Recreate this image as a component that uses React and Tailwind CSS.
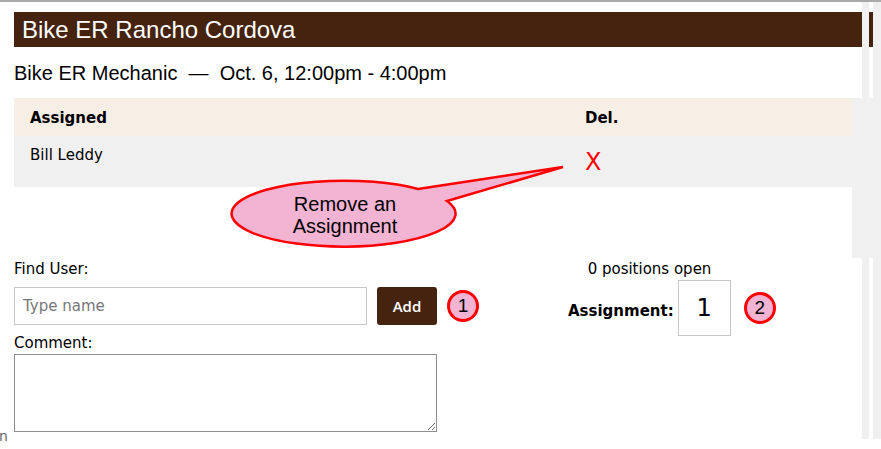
export default function App() {
  const subtitle = "Bike ER Mechanic\u00a0 \u2014\u00a0 Oct. 6, 12:00pm - 4:00pm";

  return (
    <div className="relative w-[881px] h-[449px] overflow-hidden bg-white font-['DejaVu_Sans',sans-serif] text-black">
      {/* top edge */}
      <div className="h-[2px] bg-[#a9a9a9]" />

      <div className="flex h-[437px]">
        {/* main panel */}
        <div className="w-[862px] pl-[14px] pt-[10px]">
          <div className="h-[35px] bg-[#45230f] pl-[8px] font-['Liberation_Sans',sans-serif] text-[24px] leading-[35px] text-white">
            Bike ER Rancho Cordova
          </div>

          <div className="mt-[14px] font-['Liberation_Sans',sans-serif] text-[20px] leading-[24px]">
            {subtitle}
          </div>

          {/* assignments table */}
          <div className="mt-[13px] flex">
            <div className="flex-1">
              <div className="grid h-[38px] grid-cols-[555px_1fr] items-center bg-[#f7efe5] pt-[2px] text-[15px] font-bold">
                <div className="pl-[16px]">Assigned</div>
                <div className="pl-[16px]">Del.</div>
              </div>
              <div className="grid h-[51px] grid-cols-[555px_1fr] bg-[#f0f0f0]">
                <div className="pl-[16px] pt-[10px] text-[15px] leading-[18px]">Bill Leddy</div>
                <div className="pl-[16px] pt-[12px] text-[24px] leading-[28px] text-[#ff0000]">X</div>
              </div>
            </div>
            <div className="h-[160px] w-[10px] bg-[#f0f0f0]" />
          </div>

          {/* form */}
          <div className="mt-[2px] flex text-[15px] leading-[18px]">
            <div className="w-[554px]">
              <div>Find User:</div>
              <div className="mt-[9px] flex items-center">
                <input
                  placeholder="Type name"
                  className="h-[38px] w-[353px] border border-[#c8c8c8] px-[8px] text-[15px] outline-none placeholder:text-[#777]"
                />
                <button className="ml-[10px] h-[38px] w-[60px] rounded-[3px] bg-[#45230f] font-['Open_Sans',sans-serif] text-[15px] font-semibold text-white">
                  Add
                </button>
                <div className="ml-[10px] flex h-[32px] w-[32px] items-center justify-center rounded-full border-[3px] border-[#ff0000] bg-[#f2b4d2] font-['Liberation_Sans',sans-serif] text-[19px]">
                  1
                </div>
              </div>
              <div className="mt-[9px]">Comment:</div>
              <textarea className="mt-[2px] block h-[78px] w-[423px] border border-[#8e8e8e] outline-none" />
            </div>

            <div>
              <div className="w-[163px] text-center">0 positions open</div>
              <div className="mt-[2px] flex items-center">
                <div className="pt-[6px] font-bold">Assignment:</div>
                <div className="ml-[4px] flex h-[56px] w-[53px] items-center justify-center border border-[#c8c8c8] text-[24px]">
                  1
                </div>
                <div className="ml-[13px] flex h-[32px] w-[32px] items-center justify-center rounded-full border-[3px] border-[#ff0000] bg-[#f2b4d2] font-['Liberation_Sans',sans-serif] text-[19px]">
                  2
                </div>
              </div>
            </div>
          </div>
        </div>

        {/* right gutter */}
        <div className="w-[7px] bg-[#f0f0f0]" />
        <div className="flex w-[4px] flex-col">
          <div className="h-[10px]" />
          <div className="h-[35px] bg-[#45230f]" />
          <div className="h-[51px]" />
          <div className="h-[160px] bg-[#f0f0f0]" />
        </div>
        <div className="w-[8px] bg-[#f0f0f0]" />
      </div>

      {/* callout */}
      <div className="absolute left-0 top-0">
        <svg width="881" height="449" className="pointer-events-none">
          <path
            d="M 418 189 L 563 167 L 447 201 A 112 33 0 1 1 418 189 Z"
            fill="#f2b4d2"
            stroke="#ff0000"
            strokeWidth="2.5"
            strokeLinejoin="miter"
          />
        </svg>
        <div className="absolute left-[245px] top-[193px] w-[200px] text-center font-['Liberation_Sans',sans-serif] text-[20px] leading-[22px]">
          Remove an
          <br />
          Assignment
        </div>
      </div>

      <div className="absolute left-[-1px] top-[426px] text-[14px] text-[#666]">n</div>
    </div>
  );
}
